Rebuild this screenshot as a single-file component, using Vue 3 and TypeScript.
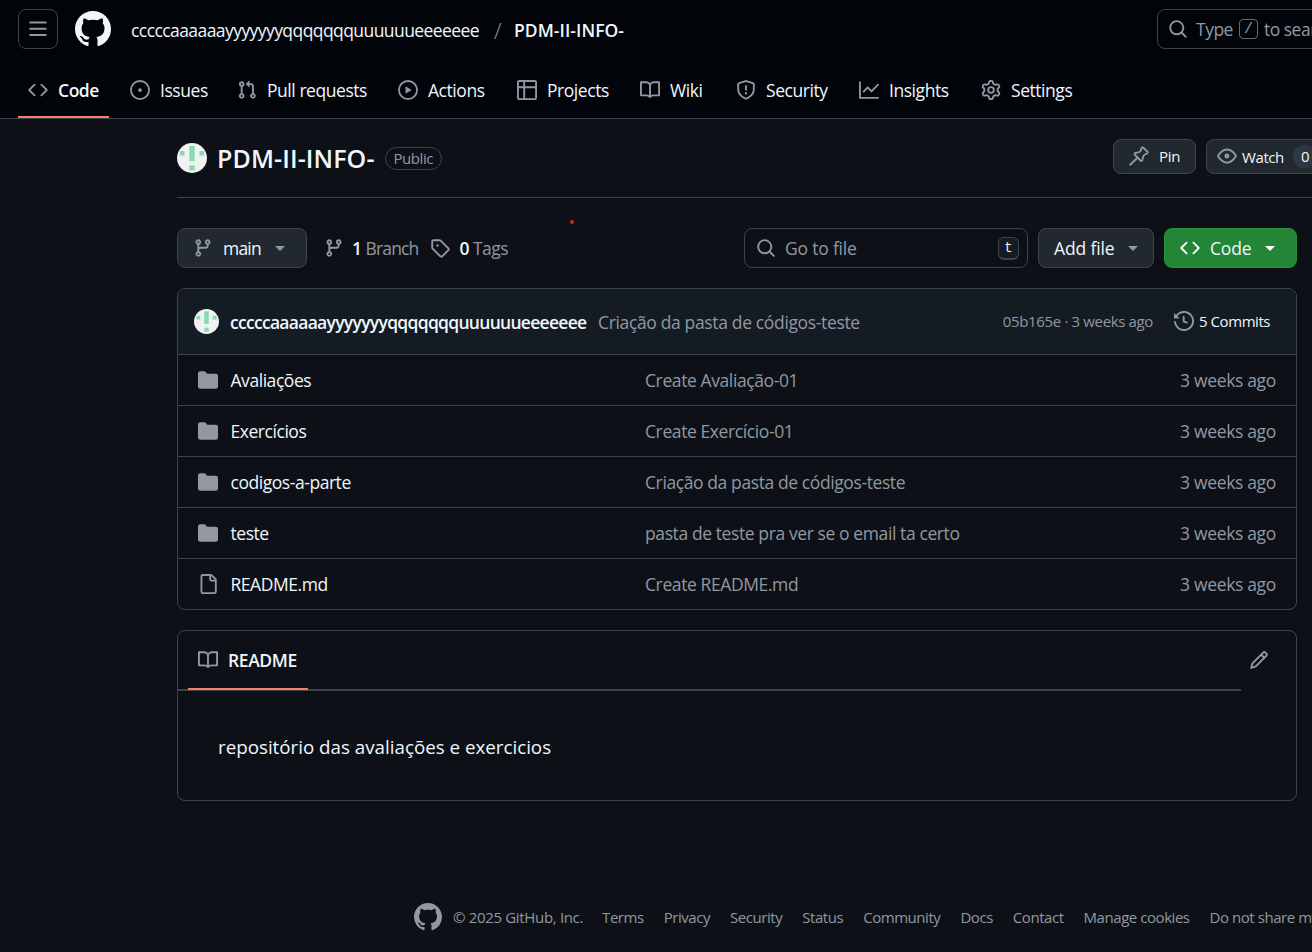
<script setup lang="ts">
const icons: Record<string, string> = {
  mark: 'M8 0c4.42 0 8 3.58 8 8a8.013 8.013 0 0 1-5.45 7.59c-.4.08-.55-.17-.55-.38 0-.27.01-1.13.01-2.2 0-.75-.25-1.23-.54-1.48 1.78-.2 3.65-.88 3.65-3.95 0-.88-.31-1.59-.82-2.15.08-.2.36-1.02-.08-2.12 0 0-.67-.22-2.2.82-.64-.18-1.32-.27-2-.27-.68 0-1.36.09-2 .27-1.53-1.03-2.2-.82-2.2-.82-.44 1.1-.16 1.92-.08 2.12-.51.56-.82 1.28-.82 2.15 0 3.06 1.86 3.75 3.64 3.95-.23.2-.44.55-.51 1.07-.46.21-1.61.55-2.33-.66-.15-.24-.6-.83-1.23-.82-.67.01-.27.38.01.53.34.19.73.9.82 1.13.16.45.68 1.31 2.69.94 0 .67.01 1.3.01 1.49 0 .21-.15.45-.55.38A7.995 7.995 0 0 1 0 8c0-4.42 3.58-8 8-8Z',
  bars: 'M1 2.75A.75.75 0 0 1 1.75 2h12.5a.75.75 0 0 1 0 1.5H1.75A.75.75 0 0 1 1 2.75Zm0 5A.75.75 0 0 1 1.75 7h12.5a.75.75 0 0 1 0 1.5H1.75A.75.75 0 0 1 1 7.75ZM1.75 12h12.5a.75.75 0 0 1 0 1.5H1.75a.75.75 0 0 1 0-1.5Z',
  code: 'm11.28 3.22 4.25 4.25a.75.75 0 0 1 0 1.06l-4.25 4.25a.749.749 0 0 1-1.275-.326.749.749 0 0 1 .215-.734L13.94 8l-3.72-3.72a.749.749 0 0 1 .326-1.275.749.749 0 0 1 .734.215Zm-6.56 0a.751.751 0 0 1 1.042.018.751.751 0 0 1 .018 1.042L2.06 8l3.72 3.72a.749.749 0 0 1-.326 1.275.749.749 0 0 1-.734-.215L.47 8.53a.75.75 0 0 1 0-1.06Z',
  issue: 'M8 9.5a1.5 1.5 0 1 0 0-3 1.5 1.5 0 0 0 0 3ZM8 0a8 8 0 1 1 0 16A8 8 0 0 1 8 0ZM1.5 8a6.5 6.5 0 1 0 13 0 6.5 6.5 0 0 0-13 0Z',
  pull: 'M1.5 3.25a2.25 2.25 0 1 1 3 2.122v5.256a2.251 2.251 0 1 1-1.5 0V5.372A2.25 2.25 0 0 1 1.5 3.25Zm5.677-.177L9.573.677A.25.25 0 0 1 10 .854V2.5h1A2.5 2.5 0 0 1 13.5 5v5.628a2.251 2.251 0 1 1-1.5 0V5a1 1 0 0 0-1-1h-1v1.646a.25.25 0 0 1-.427.177L7.177 3.427a.25.25 0 0 1 0-.354ZM3.75 2.5a.75.75 0 1 0 0 1.5.75.75 0 0 0 0-1.5Zm0 9.5a.75.75 0 1 0 0 1.5.75.75 0 0 0 0-1.5Zm8.25.75a.75.75 0 1 0 1.5 0 .75.75 0 0 0-1.5 0Z',
  play: 'M8 0a8 8 0 1 1 0 16A8 8 0 0 1 8 0ZM1.5 8a6.5 6.5 0 1 0 13 0 6.5 6.5 0 0 0-13 0Zm4.879-2.773 4.264 2.559a.25.25 0 0 1 0 .428l-4.264 2.559A.25.25 0 0 1 6 10.559V5.442a.25.25 0 0 1 .379-.215Z',
  table: 'M0 1.75C0 .784.784 0 1.75 0h12.5C15.216 0 16 .784 16 1.75v12.5A1.75 1.75 0 0 1 14.25 16H1.75A1.75 1.75 0 0 1 0 14.25ZM6.5 6.5v8h7.75a.25.25 0 0 0 .25-.25V6.5Zm8-1.5V1.75a.25.25 0 0 0-.25-.25H6.5V5Zm-13 1.5v7.75c0 .138.112.25.25.25H5v-8ZM5 5V1.5H1.75a.25.25 0 0 0-.25.25V5Z',
  book: 'M0 1.75A.75.75 0 0 1 .75 1h4.253c1.227 0 2.317.59 3 1.501A3.743 3.743 0 0 1 11.006 1h4.245a.75.75 0 0 1 .75.75v10.5a.75.75 0 0 1-.75.75h-4.507a2.25 2.25 0 0 0-1.591.659l-.622.621a.75.75 0 0 1-1.06 0l-.622-.621A2.25 2.25 0 0 0 5.258 13H.75a.75.75 0 0 1-.75-.75Zm7.251 10.324.004-5.073-.002-2.253A2.25 2.25 0 0 0 5.003 2.5H1.5v9h3.757a3.75 3.75 0 0 1 1.994.574ZM8.755 4.75l-.004 7.322a3.752 3.752 0 0 1 1.992-.572H14.5v-9h-3.495a2.25 2.25 0 0 0-2.25 2.25Z',
  shield: 'M7.467.133a1.748 1.748 0 0 1 1.066 0l5.25 1.68A1.75 1.75 0 0 1 15 3.48V7c0 1.566-.32 3.182-1.303 4.682-.983 1.498-2.585 2.813-5.032 3.855a1.697 1.697 0 0 1-1.33 0c-2.447-1.042-4.049-2.357-5.032-3.855C1.32 10.182 1 8.566 1 7V3.48a1.75 1.75 0 0 1 1.217-1.667Zm.61 1.429a.25.25 0 0 0-.153 0l-5.25 1.68a.25.25 0 0 0-.174.238V7c0 1.358.275 2.666 1.057 3.86.784 1.194 2.121 2.34 4.366 3.297a.196.196 0 0 0 .154 0c2.245-.956 3.582-2.104 4.366-3.298C13.225 9.666 13.5 8.36 13.5 7V3.48a.251.251 0 0 0-.174-.237l-5.25-1.68ZM8.75 4.75v3a.75.75 0 0 1-1.5 0v-3a.75.75 0 0 1 1.5 0ZM9 10.5a1 1 0 1 1-2 0 1 1 0 0 1 2 0Z',
  graph: 'M1.5 1.75V13.5h13.75a.75.75 0 0 1 0 1.5H.75a.75.75 0 0 1-.75-.75V1.75a.75.75 0 0 1 1.5 0Zm14.28 2.53-5.25 5.25a.75.75 0 0 1-1.06 0L7 7.06 4.28 9.78a.751.751 0 0 1-1.042-.018.751.751 0 0 1-.018-1.042l3.25-3.25a.75.75 0 0 1 1.06 0L10 7.94l4.72-4.72a.751.751 0 0 1 1.042.018.751.751 0 0 1 .018 1.042Z',
  gear: 'M8 0a8.2 8.2 0 0 1 .701.031C9.444.095 9.99.645 10.16 1.29l.288 1.107c.018.066.079.158.212.224.231.114.454.243.668.386.123.082.233.09.299.071l1.103-.303c.644-.176 1.392.021 1.82.63.27.385.506.792.704 1.218.315.675.111 1.422-.364 1.891l-.814.806c-.049.048-.098.147-.088.294.016.257.016.515 0 .772-.01.147.038.246.088.294l.814.806c.475.469.679 1.216.364 1.891a7.977 7.977 0 0 1-.704 1.217c-.428.61-1.176.807-1.82.63l-1.102-.302c-.067-.019-.177-.011-.3.071a5.909 5.909 0 0 1-.668.386c-.133.066-.194.158-.211.224l-.29 1.106c-.168.646-.715 1.196-1.458 1.26a8.006 8.006 0 0 1-1.402 0c-.743-.064-1.289-.614-1.458-1.26l-.289-1.106c-.018-.066-.079-.158-.212-.224a5.738 5.738 0 0 1-.668-.386c-.123-.082-.233-.09-.299-.071l-1.103.303c-.644.176-1.392-.021-1.82-.63a8.12 8.12 0 0 1-.704-1.218c-.315-.675-.111-1.422.363-1.891l.815-.806c.05-.048.098-.147.088-.294a6.214 6.214 0 0 1 0-.772c.01-.147-.038-.246-.088-.294l-.815-.806C.635 6.045.431 5.298.746 4.623a7.92 7.92 0 0 1 .704-1.217c.428-.61 1.176-.807 1.82-.63l1.102.302c.067.019.177.011.3-.071.214-.143.437-.272.668-.386.133-.066.194-.158.211-.224l.29-1.106C6.009.645 6.556.095 7.299.03 7.53.01 7.764 0 8 0Zm-.571 1.525c-.036.003-.108.036-.137.146l-.289 1.105c-.147.561-.549.967-.998 1.189-.173.086-.34.183-.5.29-.417.278-.97.423-1.529.27l-1.103-.303c-.109-.03-.175.016-.195.045-.22.312-.412.644-.573.99-.014.031-.021.11.059.19l.815.806c.411.406.562.957.53 1.456a4.709 4.709 0 0 0 0 .582c.032.499-.119 1.05-.53 1.456l-.815.806c-.081.08-.073.159-.059.19.162.346.353.677.573.989.02.03.085.076.195.046l1.102-.303c.56-.153 1.113-.008 1.53.27.161.107.328.204.501.29.447.222.85.629.997 1.189l.289 1.105c.029.109.101.143.137.146a6.6 6.6 0 0 0 1.142 0c.036-.003.108-.036.137-.146l.289-1.105c.147-.561.549-.967.998-1.189.173-.086.34-.183.5-.29.417-.278.97-.423 1.529-.27l1.103.303c.109.029.175-.016.195-.045.22-.313.411-.644.573-.99.014-.031.021-.11-.059-.19l-.815-.806c-.411-.406-.562-.957-.53-1.456a4.709 4.709 0 0 0 0-.582c-.032-.499.119-1.05.53-1.456l.815-.806c.081-.08.073-.159.059-.19a6.464 6.464 0 0 0-.573-.989c-.02-.03-.085-.076-.195-.046l-1.102.303c-.56.153-1.113.008-1.53-.27a4.44 4.44 0 0 0-.501-.29c-.447-.222-.85-.629-.997-1.189l-.289-1.105c-.029-.11-.101-.143-.137-.146a6.6 6.6 0 0 0-1.142 0ZM11 8a3 3 0 1 1-6 0 3 3 0 0 1 6 0ZM9.5 8a1.5 1.5 0 1 0-3.001.001A1.5 1.5 0 0 0 9.5 8Z',
  search: 'M10.68 11.74a6 6 0 0 1-7.922-8.982 6 6 0 0 1 8.982 7.922l3.04 3.04a.749.749 0 0 1-.326 1.275.749.749 0 0 1-.734-.215ZM11.5 7a4.499 4.499 0 1 0-8.997 0A4.499 4.499 0 0 0 11.5 7Z',
  eye: 'M8 2c1.981 0 3.671.992 4.933 2.078 1.27 1.091 2.187 2.345 2.637 3.023a1.62 1.62 0 0 1 0 1.798c-.45.678-1.367 1.932-2.637 3.023C11.67 13.008 9.981 14 8 14c-1.981 0-3.671-.992-4.933-2.078C1.797 10.83.88 9.576.43 8.898a1.62 1.62 0 0 1 0-1.798c.45-.677 1.367-1.931 2.637-3.022C4.33 2.992 6.019 2 8 2ZM1.679 7.932a.12.12 0 0 0 0 .136c.411.622 1.241 1.75 2.366 2.717C5.176 11.758 6.527 12.5 8 12.5c1.473 0 2.825-.742 3.955-1.715 1.124-.967 1.954-2.096 2.366-2.717a.12.12 0 0 0 0-.136c-.412-.621-1.242-1.75-2.366-2.717C10.824 4.242 9.473 3.5 8 3.5c-1.473 0-2.825.742-3.955 1.715-1.124.967-1.954 2.096-2.366 2.717ZM8 10a2 2 0 1 1-.001-3.999A2 2 0 0 1 8 10Z',
  branch: 'M9.5 3.25a2.25 2.25 0 1 1 3 2.122V6A2.5 2.5 0 0 1 10 8.5H6a1 1 0 0 0-1 1v1.128a2.251 2.251 0 1 1-1.5 0V5.372a2.25 2.25 0 1 1 1.5 0v1.836A2.493 2.493 0 0 1 6 7h4a1 1 0 0 0 1-1v-.628A2.25 2.25 0 0 1 9.5 3.25Zm-6 0a.75.75 0 1 0 1.5 0 .75.75 0 0 0-1.5 0Zm8.25-.75a.75.75 0 1 0 0 1.5.75.75 0 0 0 0-1.5ZM4.25 12a.75.75 0 1 0 0 1.5.75.75 0 0 0 0-1.5Z',
  tag: 'M1 7.775V2.75C1 1.784 1.784 1 2.75 1h5.025c.464 0 .91.184 1.238.513l6.25 6.25a1.75 1.75 0 0 1 0 2.474l-5.026 5.026a1.75 1.75 0 0 1-2.474 0l-6.25-6.25A1.752 1.752 0 0 1 1 7.775Zm1.5 0c0 .066.026.13.073.177l6.25 6.25a.25.25 0 0 0 .354 0l5.025-5.025a.25.25 0 0 0 0-.354l-6.25-6.25a.25.25 0 0 0-.177-.073H2.75a.25.25 0 0 0-.25.25ZM6 5a1 1 0 1 1 0 2 1 1 0 0 1 0-2Z',
  history: 'm.427 1.927 1.215 1.215a8.002 8.002 0 1 1-1.6 5.685.75.75 0 1 1 1.493-.154 6.5 6.5 0 1 0 1.18-4.458l1.358 1.358A.25.25 0 0 1 3.896 6H.25A.25.25 0 0 1 0 5.75V2.104a.25.25 0 0 1 .427-.177ZM7.75 4a.75.75 0 0 1 .75.75v2.992l2.028.812a.75.75 0 0 1-.557 1.392l-2.5-1A.751.751 0 0 1 7 8.25v-3.5A.75.75 0 0 1 7.75 4Z',
  folder: 'M1.75 1A1.75 1.75 0 0 0 0 2.75v10.5C0 14.216.784 15 1.75 15h12.5A1.75 1.75 0 0 0 16 13.25v-8.5A1.75 1.75 0 0 0 14.25 3H7.5a.25.25 0 0 1-.2-.1l-.9-1.2C6.07 1.26 5.55 1 5 1H1.75Z',
  file: 'M2 1.75C2 .784 2.784 0 3.75 0h6.586c.464 0 .909.184 1.237.513l2.914 2.914c.329.328.513.773.513 1.237v9.586A1.75 1.75 0 0 1 13.25 16h-9.5A1.75 1.75 0 0 1 2 14.25Zm1.75-.25a.25.25 0 0 0-.25.25v12.5c0 .138.112.25.25.25h9.5a.25.25 0 0 0 .25-.25V6h-2.75A1.75 1.75 0 0 1 9 4.25V1.5Zm6.75.062V4.25c0 .138.112.25.25.25h2.688l-.011-.013-2.914-2.914-.013-.011Z',
  pencil: 'M11.013 1.427a1.75 1.75 0 0 1 2.474 0l1.086 1.086a1.75 1.75 0 0 1 0 2.474l-8.61 8.61c-.21.21-.47.364-.756.445l-3.251.93a.75.75 0 0 1-.927-.928l.929-3.25c.081-.286.235-.547.445-.758l8.61-8.61Zm.176 4.823L9.75 4.81l-6.286 6.287a.253.253 0 0 0-.064.108l-.558 1.953 1.953-.558a.253.253 0 0 0 .108-.064Zm1.238-3.763a.25.25 0 0 0-.354 0L10.811 3.75l1.439 1.44 1.263-1.263a.25.25 0 0 0 0-.354Z'
}

const tabs = [
  { label: 'Code', icon: 'code', w: 41, active: true },
  { label: 'Issues', icon: 'issue', w: 47 },
  { label: 'Pull requests', icon: 'pull', w: 101 },
  { label: 'Actions', icon: 'play', w: 59 },
  { label: 'Projects', icon: 'table', w: 63 },
  { label: 'Wiki', icon: 'book', w: 36 },
  { label: 'Security', icon: 'shield', w: 63 },
  { label: 'Insights', icon: 'graph', w: 62 },
  { label: 'Settings', icon: 'gear', w: 63 }
]

const rows = [
  { name: 'Avaliações', icon: 'folder', msg: 'Create Avaliação-01' },
  { name: 'Exercícios', icon: 'folder', msg: 'Create Exercício-01' },
  { name: 'codigos-a-parte', icon: 'folder', msg: 'Criação da pasta de códigos-teste' },
  { name: 'teste', icon: 'folder', msg: 'pasta de teste pra ver se o email ta certo' },
  { name: 'README.md', icon: 'file', msg: 'Create README.md' }
]

const footerLinks = ['Terms', 'Privacy', 'Security', 'Status', 'Community', 'Docs', 'Contact', 'Manage cookies', 'Do not share my personal information']
</script>

<template>
  <div class="page">
    <header class="header">
      <div class="top">
        <button class="menu"><svg class="i" viewBox="0 0 16 16"><path :d="icons.bars" /></svg></button>
        <svg class="logo" viewBox="0 0 16 16"><path :d="icons.mark" /></svg>
        <span class="owner">cccccaaaaaayyyyyyyqqqqqqquuuuuueeeeeee</span>
        <span class="slash">/</span>
        <span class="reponame">PDM-II-INFO-</span>
        <div class="globalsearch">
          <svg class="i" viewBox="0 0 16 16"><path :d="icons.search" /></svg>
          <span>Type</span><kbd>/</kbd><span>to search</span>
        </div>
      </div>
      <nav class="tabs">
        <a v-for="t in tabs" :key="t.label" class="tab" :class="{ active: t.active }">
          <svg class="i" viewBox="0 0 16 16"><path :d="icons[t.icon]" /></svg>
          <span :style="{ width: t.w + 'px' }">{{ t.label }}</span>
        </a>
      </nav>
    </header>

    <main class="main">
      <div class="titlerow">
        <svg class="avatar big" viewBox="0 0 100 100"><circle cx="50" cy="50" r="50" fill="#f0f1f0" /><path d="M41 10h18v50H41zM41 75h18v16H41zM10 27h15v15H10zM75 27h15v15H75z" fill="#85dab3" /></svg>
        <h1>PDM-II-INFO-</h1>
        <span class="badge">Public</span>
        <div class="titleactions">
          <button class="btn small pin">
            <svg class="i" viewBox="0 0 16 16"><path fill="none" stroke="#9198a1" stroke-width="1.5" stroke-linejoin="round" stroke-linecap="round" d="M10.2 1.3a.9.9 0 0 1 1.2 0l3.3 3.3a.9.9 0 0 1-.2 1.4l-1.7.8a3 3 0 0 0-1.6 2l-.5 2.4a.9.9 0 0 1-1.5.4L4.7 7.1a.9.9 0 0 1 .4-1.500L7.500 5.100a3 3 0 0 0 2-1.600ZM6.900 9.200 1 15" /></svg>
            <span>Pin</span>
          </button>
          <button class="btn small watch">
            <svg class="i" viewBox="0 0 16 16"><path :d="icons.eye" /></svg>
            <span class="watchlabel">Watch</span>
            <span class="counter">0</span>
          </button>
        </div>
      </div>

      <div class="content">
        <div class="toolbar">
          <button class="btn branchbtn">
            <svg class="i" viewBox="0 0 16 16"><path :d="icons.branch" /></svg>
            <span>main</span><i class="caret"></i>
          </button>
          <span class="meta first"><svg class="i" viewBox="0 0 16 16"><path :d="icons.branch" /></svg><b>1</b><em>Branch</em></span>
          <span class="meta tags"><svg class="i" viewBox="0 0 16 16"><path :d="icons.tag" /></svg><b>0</b><em>Tags</em></span>
          <span class="reddot"></span>
          <div class="gofile">
            <svg class="i" viewBox="0 0 16 16"><path :d="icons.search" /></svg>
            <span>Go to file</span>
            <kbd>t</kbd>
          </div>
          <button class="btn addfile"><span>Add file</span><i class="caret"></i></button>
          <button class="btn green">
            <svg class="i" viewBox="0 0 16 16"><path :d="icons.code" /></svg>
            <span>Code</span><i class="caret"></i>
          </button>
        </div>

        <section class="files">
          <div class="commit">
            <svg class="avatar" viewBox="0 0 100 100"><circle cx="50" cy="50" r="50" fill="#f0f1f0" /><path d="M41 10h18v50H41zM41 75h18v16H41zM10 27h15v15H10zM75 27h15v15H75z" fill="#85dab3" /></svg>
            <strong>cccccaaaaaayyyyyyyqqqqqqquuuuuueeeeeee</strong>
            <span class="cmsg">Criação da pasta de códigos-teste</span>
            <span class="hash">05b165e · 3 weeks ago</span>
            <span class="commits"><svg class="i" viewBox="0 0 16 16"><path :d="icons.history" /></svg>5 Commits</span>
          </div>
          <div v-for="r in rows" :key="r.name" class="row">
            <svg class="i" viewBox="0 0 16 16"><path :d="icons[r.icon]" /></svg>
            <span class="fname">{{ r.name }}</span>
            <span class="fmsg">{{ r.msg }}</span>
            <span class="ftime">3 weeks ago</span>
          </div>
        </section>

        <section class="readme">
          <div class="readmehead">
            <div class="readmetab">
              <svg class="i" viewBox="0 0 16 16"><path :d="icons.book" /></svg>
              <span>README</span>
            </div>
            <svg class="i pencil" viewBox="0 0 16 16"><path :d="icons.pencil" /></svg>
          </div>
          <p>repositório das avaliações e exercicios</p>
        </section>
      </div>

      <footer class="footer">
        <svg class="flogo" viewBox="0 0 16 16"><path :d="icons.mark" /></svg>
        <span class="copy">© 2025 GitHub, Inc.</span>
        <a v-for="l in footerLinks" :key="l">{{ l }}</a>
      </footer>
    </main>
  </div>
</template>

<style>
html, body { margin: 0; background: #0d1117; overflow: hidden; }
</style>

<style scoped>
.page {
  width: 1312px;
  height: 952px;
  overflow: hidden;
  background: #0d1117;
  color: #f0f6fc;
  font-family: "Open Sans", "Noto Sans", sans-serif;
  font-size: 17.5px;
  letter-spacing: -0.5px;
}
button { font: inherit; letter-spacing: inherit; color: inherit; padding: 0; cursor: pointer; }
kbd { font-family: "Liberation Mono", monospace; letter-spacing: 0; }
.i { width: 20px; height: 20px; fill: #9198a1; flex: none; display: block; }

.header {
  height: 118px;
  background: #010409;
  border-bottom: 1px solid #3d444d;
  padding-left: 18px;
}
.top { height: 58px; display: flex; align-items: center; white-space: nowrap; }
.menu {
  width: 40px; height: 40px; border: 1px solid #3d444d; border-radius: 8px;
  background: transparent; display: flex; align-items: center; justify-content: center; flex: none;
}
.logo { width: 36px; height: 36px; fill: #f0f6fc; margin-left: 17px; flex: none; }
.owner { margin: 2px 0 0 20px; width: 349px; flex: none; letter-spacing: -0.57px; }
.slash { margin: 1px 0 0 14px; color: #9198a1; font-size: 22px; width: 20px; flex: none; font-weight: 300; }
.reponame { margin-top: 2px; font-weight: 600; width: 300px; flex: none; letter-spacing: 0.05px; }
.globalsearch {
  margin-left: 343px; width: 400px; height: 40px; flex: none;
  border: 1px solid #3d444d; border-radius: 8px; display: flex; align-items: center;
  box-sizing: border-box; padding-left: 10px; gap: 8px; color: #9198a1;
}
.globalsearch kbd {
  width: 19px; height: 20px; border: 1px solid #656c76; border-radius: 4px;
  font-size: 15px; display: flex; align-items: center; justify-content: center; box-sizing: border-box; margin: 0 -2px;
}

.tabs { display: flex; height: 60px; gap: 10px; }
.tab {
  display: flex; align-items: center; gap: 10px; padding: 5px 10px 0;
  height: 60px; box-sizing: border-box; white-space: nowrap; border-bottom: 2px solid transparent;
  letter-spacing: -0.45px;
}
.tab.active { border-bottom-color: #f78166; font-weight: 600; margin-right: 1px; }

.main { padding-left: 177px; }
.titlerow {
  width: 1240px; height: 79px; box-sizing: border-box; display: flex; align-items: center;
  border-bottom: 1px solid #3d444d; white-space: nowrap;
}
.avatar { width: 25px; height: 25px; flex: none; }
.avatar.big { width: 30px; height: 30px; }
h1 { margin: 0 0 0 10px; font-size: 25px; font-weight: 600; line-height: 1.3; letter-spacing: 0.1px; }
.badge {
  margin-left: 10px; height: 23px; line-height: 21px; box-sizing: border-box;
  border: 1px solid #3d444d; border-radius: 12px; padding: 0 8px; font-size: 15px; color: #9198a1; letter-spacing: -0.45px;
}
.titleactions { margin-left: auto; display: flex; gap: 10px; margin-top: -4px; }
.btn {
  background: #212830; border: 1px solid #3d444d; border-radius: 8px;
  display: flex; align-items: center; box-sizing: border-box; white-space: nowrap; flex: none;
}
.btn.small { height: 35px; font-size: 15px; letter-spacing: -0.3px; }
.pin { width: 83px; padding-left: 15px; gap: 10px; }
.watch { width: 211px; padding-left: 10px; gap: 5px; }
.watchlabel { margin-top: 1px; letter-spacing: -0.4px; }
.counter {
  background: #2f3742; border-radius: 12px; padding: 0 8px; height: 23px; line-height: 23px; margin-left: 4px;
}

.content { width: 1120px; }
.toolbar { display: flex; align-items: center; height: 40px; margin-top: 30px; position: relative; }
.branchbtn { width: 130px; height: 40px; padding-left: 15px; letter-spacing: -0.8px; }
.branchbtn span { margin-left: 10px; }
.caret {
  display: block; width: 0; height: 0; border-left: 5px solid transparent; border-right: 5px solid transparent;
  border-top: 5px solid #9198a1; flex: none; margin-left: 14px;
}
.meta { display: flex; align-items: center; margin-left: 13px; white-space: nowrap; }
.meta.first { margin-left: 17px; }
.meta.tags { margin-left: 12px; }
.meta.tags b { margin-left: 9px; }
.meta b { font-weight: 600; margin-left: 8px; }
.meta em { font-style: normal; color: #9198a1; margin-left: 4px; letter-spacing: -0.85px; }
.meta.tags em { letter-spacing: -0.5px; }
.reddot {
  position: absolute; left: 393px; top: -8px; width: 4px; height: 4px; border-radius: 50%; background: #e0201c;
}
.gofile {
  margin-left: auto; width: 284px; height: 40px; box-sizing: border-box;
  border: 1px solid #3d444d; border-radius: 8px; display: flex; align-items: center;
  padding: 0 8px 0 11px; gap: 9px; color: #9198a1; letter-spacing: -0.2px;
}
.gofile kbd {
  margin-left: auto; width: 21px; height: 23px; box-sizing: border-box; color: #f0f6fc;
  border: 1px solid #3d444d; border-bottom-width: 2px; border-radius: 6px; font-size: 14px;
  display: flex; align-items: center; justify-content: center; background: #151b23;
}
.addfile { width: 116px; height: 40px; margin-left: 10px; padding-left: 15px; letter-spacing: -0.15px; }
.addfile .caret { margin-left: 14px; }
.green { width: 133px; height: 40px; margin-left: 10px; background: #238636; border-color: #2a8f3e; padding-left: 15px; gap: 10px; letter-spacing: -0.2px; }
.green .i { fill: #fff; }
.green .caret { border-top-color: #fff; margin-left: 4px; }

.files {
  margin-top: 20px; border: 1px solid #3d444d; border-radius: 8px; overflow: hidden;
}
.commit {
  height: 65px; background: #151b23; display: flex; align-items: center; box-sizing: border-box;
  padding: 0 26px 0 16px; white-space: nowrap;
}
.commit strong { margin-left: 11px; font-weight: 600; width: 358px; flex: none; letter-spacing: -0.71px; }
.cmsg { margin-left: 10px; color: #9198a1; letter-spacing: -0.35px; }
.hash { margin-left: auto; font-size: 15px; color: #9198a1; margin-top: -1px; letter-spacing: -0.35px; }
.commits { display: flex; align-items: center; gap: 5px; margin-left: 21px; font-size: 15px; margin-top: -1px; letter-spacing: -0.45px; }
.row {
  height: 51px; box-sizing: border-box; border-top: 1px solid #3d444d;
  display: grid; grid-template-columns: 33px 414px 1fr auto; align-items: center; padding: 0 20px; white-space: nowrap;
}
.fmsg { color: #9198a1; letter-spacing: -0.4px; }
.ftime { color: #9198a1; letter-spacing: -0.33px; }
.fname { letter-spacing: -0.45px; margin-left: -0.5px; }

.readme { margin-top: 20px; height: 171px; box-sizing: border-box; border: 1px solid #3d444d; border-radius: 8px; }
.readmehead {
  height: 60px; margin-right: 55px; padding-left: 10px; display: flex; align-items: flex-start;
  border-bottom: 2px solid #3d444d; position: relative; box-sizing: border-box;
}
.readmetab {
  height: 59px; width: 120px; box-sizing: border-box; border-bottom: 2px solid #f78166; flex: none;
  display: flex; align-items: center; gap: 10px; font-weight: 600; padding: 1px 0 0 10px; letter-spacing: -0.4px;
}
.pencil { position: absolute; right: -28px; top: 19px; }
.readme p { margin: 0; padding: 44px 40px 0; line-height: 24px; font-size: 18.75px; letter-spacing: 0; }

.footer {
  height: 30px; margin-top: 101px; display: flex; align-items: center; white-space: nowrap; font-size: 15px; color: #9198a1;
  padding-left: 237px; gap: 20px; letter-spacing: -0.45px;
}
.copy { letter-spacing: -0.33px; margin-right: -1px; }
.flogo { width: 28px; height: 28px; fill: #9198a1; flex: none; margin-right: -9px; }
</style>
